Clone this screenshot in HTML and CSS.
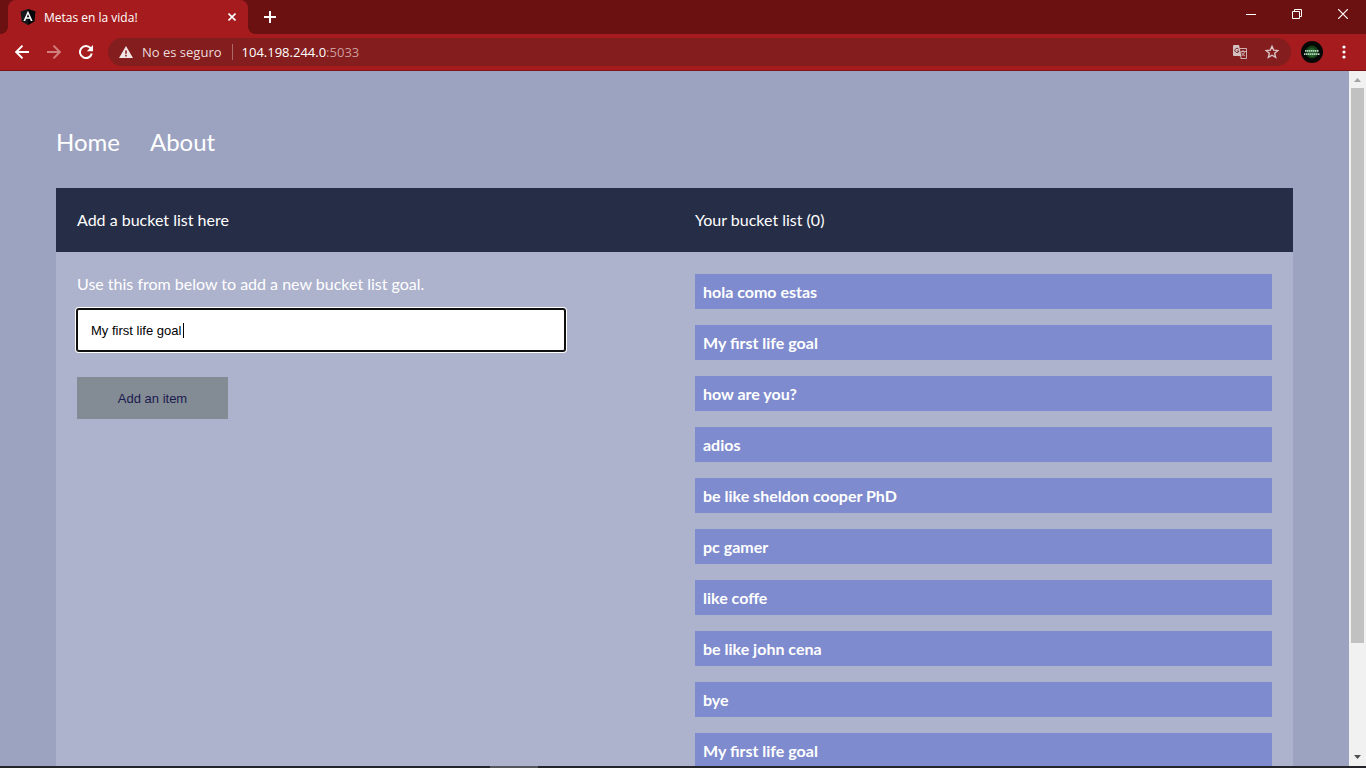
FILE: index.html
```html
<!DOCTYPE html>
<html lang="es">
<head>
<meta charset="utf-8">
<title>Metas en la vida!</title>
<link rel="stylesheet" href="styles.css">
</head>
<body>
<header class="browser">
  <div class="tab-strip">
    <div class="tab">
      <svg class="favicon" viewBox="0 0 16 16" width="16" height="16" aria-hidden="true">
        <path d="M8 0l7.4 2.6-1.1 9.8L8 16l-6.3-3.6L.6 2.6z" fill="#15181d"/>
        <path d="M8 0l7.4 2.6-1.1 9.8L8 16z" fill="#050608"/>
        <path d="M8 1.8L3.4 12h1.800l.9-2.300h3.800l.9 2.300h1.800zM8 5.100l1.300 3.100H6.700z" fill="#fff" fill-rule="evenodd"/>
      </svg>
      <span class="tab-title">Metas en la vida!</span>
      <button class="tab-close" aria-label="Cerrar pestaña"><svg viewBox="0 0 8 8" width="8" height="8"><path d="M.5.5l7 7M7.500.500l-7 7" stroke="#fff" stroke-width="1.600"/></svg></button>
    </div>
    <button class="tab-new" aria-label="Nueva pestaña"><svg viewBox="0 0 12 12" width="12" height="12"><path d="M6 0v12M0 6h12" stroke="#fff" stroke-width="2"/></svg></button>
    <div class="window-controls">
      <button aria-label="Minimizar"><svg viewBox="0 0 10 10" width="10" height="10"><path d="M0 5.500h10" stroke="#fff"/></svg></button>
      <button aria-label="Restaurar"><svg viewBox="0 0 10 10" width="10" height="10"><path d="M.5 2.500h7v7h-7zM2.500 2.500v-2h7v7h-2" fill="none" stroke="#fff"/></svg></button>
      <button aria-label="Cerrar"><svg viewBox="0 0 10 10" width="10" height="10"><path d="M0 0l10 10M10 0L0 10" stroke="#fff" stroke-width="1.200"/></svg></button>
    </div>
  </div>
  <div class="toolbar">
    <div class="nav-buttons">
      <button aria-label="Atrás"><svg viewBox="0 0 14 14" width="14" height="14"><path d="M14 7H1.500M7.500.700L1.200 7l6.300 6.300" fill="none" stroke="#fff" stroke-width="1.900"/></svg></button>
      <button aria-label="Adelante"><svg viewBox="0 0 14 14" width="14" height="14"><path d="M0 7h12.500M6.500.700L12.800 7l-6.300 6.300" fill="none" stroke="#d1807f" stroke-width="1.900"/></svg></button>
      <button aria-label="Recargar"><svg viewBox="0 0 14 14" width="14" height="14"><path d="M11.600 3.200A6 6 0 1 0 12.800 8.500" fill="none" stroke="#fff" stroke-width="2"/><path d="M14 0v6.200H7.800z" fill="#fff"/></svg></button>
    </div>
    <div class="address">
      <svg class="warning" viewBox="0 0 14 12" width="14" height="12" aria-hidden="true"><path d="M7 0l7 12H0zM6.200 4.500v3.200h1.600V4.500zM6.200 8.800v1.600h1.600V8.800z" fill="#f0e4e4" fill-rule="evenodd"/></svg>
      <span class="security">No es seguro</span>
      <span class="url">104.198.244.0<span class="port">:5033</span></span>
      <button class="translate" aria-label="Traducir"><svg viewBox="0 0 14 14" width="14" height="14"><path d="M6.500 3.500h7v10h-6" fill="none" stroke="#cdb1b2"/><path d="M0 1q0-1 1-1h5l2.500 11H1q-1 0-1-1z" fill="#d4c2c2"/><path d="M5.600 4.100A2.100 2.100 0 1 0 6 6H4" fill="none" stroke="#7d3032"/><path d="M7.500 6.500H13M10 5v1.500M11.800 6.500q-.8 3-3.300 4.500M8.500 7.500q1.200 2.500 3.500 3.500M7 11l1.800 2.500" fill="none" stroke="#cdb1b2"/></svg></button>
      <button aria-label="Añadir a marcadores"><svg viewBox="0 0 14 14" width="14" height="14"><path d="M7 1.300l1.650 3.850 4.200.4-3.200 2.750 1 4.100L7 10.200l-3.650 2.200 1-4.100-3.200-2.750 4.200-.4z" fill="none" stroke="#dac4c4" stroke-width="1.400"/></svg></button>
    </div>
    <button class="avatar" aria-label="Perfil"><svg viewBox="0 0 22 22" width="22" height="22"><circle cx="11" cy="11" r="11" fill="#050807"/><circle cx="11" cy="11" r="6.500" fill="#153d18"/><circle cx="11" cy="11.500" r="4.500" fill="#21602a"/><path d="M4 9.800h14M3 13.200h16" stroke="#b9d4bd" stroke-width="1.700" stroke-dasharray="1.500 .5"/></svg></button>
    <button class="menu" aria-label="Menú"><svg viewBox="0 0 4 14" width="4" height="14"><circle cx="2" cy="2" r="1.600" fill="#fff"/><circle cx="2" cy="7" r="1.600" fill="#fff"/><circle cx="2" cy="12" r="1.600" fill="#fff"/></svg></button>
  </div>
</header>
<div class="viewport">
  <div class="page">
    <nav class="site-nav">
      <a href="#home">Home</a>
      <a href="#about">About</a>
    </nav>
    <main class="card">
      <div class="card-head">
        <p>Add a bucket list here</p>
        <p>Your bucket list (0)</p>
      </div>
      <div class="card-body">
        <form class="goal-form">
          <label for="goal">Use this from below to add a new bucket list goal.</label>
          <div class="field">
            <input id="goal" type="text" value="My first life goal">
            <span class="caret"></span>
          </div>
          <button class="submit" type="button">Add an item</button>
        </form>
        <ul class="goals">
          <li>hola como estas</li>
          <li>My first life goal</li>
          <li>how are you?</li>
          <li>adios</li>
          <li>be like sheldon cooper PhD</li>
          <li>pc gamer</li>
          <li>like coffe</li>
          <li>be like john cena</li>
          <li>bye</li>
          <li>My first life goal</li>
        </ul>
      </div>
    </main>
  </div>
  <div class="scrollbar">
    <svg viewBox="0 0 17 17" width="17" height="17"><path d="M5 11h7L8.500 7z" fill="#a3a3a3"/></svg>
    <div class="track"><div class="thumb"></div></div>
    <svg viewBox="0 0 17 17" width="17" height="17"><path d="M5 6h7L8.500 10z" fill="#505050"/></svg>
  </div>
</div>
<div class="taskbar"><span class="task"></span></div>
</body>
</html>
```
FILE: styles.css
```css
* { box-sizing: border-box; }

body {
  display: flex;
  flex-direction: column;
  height: 100vh;
  margin: 0;
  overflow: hidden;
  font-family: Lato, sans-serif;
  font-size: 16px;
  color: #fff;
}

button {
  display: flex;
  align-items: center;
  justify-content: center;
  padding: 0;
  border: 0;
  background: none;
}

svg { display: block; flex: none; }

/* Browser frame */
.browser {
  flex: none;
  background: #a61c1e;
  border-bottom: 1px solid #7d1416;
  font-family: "Open Sans", sans-serif;
}

.tab-strip {
  display: flex;
  height: 34px;
  padding-left: 8px;
  background: #6b1112;
}

.tab {
  position: relative;
  display: flex;
  align-items: center;
  width: 240px;
  padding: 0 12px;
  border-radius: 8px 8px 0 0;
  background: #a61c1e;
}

.tab::before,
.tab::after {
  content: "";
  position: absolute;
  bottom: 0;
  width: 8px;
  height: 8px;
}

.tab::before {
  right: 100%;
  background: radial-gradient(circle at 0 0, #6b1112 8px, #a61c1e 8px);
}

.tab::after {
  left: 100%;
  background: radial-gradient(circle at 100% 0, #6b1112 8px, #a61c1e 8px);
}

.tab-title { flex: 1; margin-left: 8px; font-size: 12px; }
.tab-close { width: 8px; height: 16px; }
.tab-new { width: 28px; margin-left: 8px; }
.window-controls { display: flex; height: 28px; margin-left: auto; }
.window-controls button { width: 46px; }

.toolbar {
  display: flex;
  align-items: center;
  height: 36px;
  padding: 0 12px 0 6px;
}

.nav-buttons { display: flex; }
.nav-buttons button { width: 32px; height: 28px; }

.address {
  display: flex;
  flex: 1;
  align-items: center;
  height: 28px;
  margin: 0 10px 0 6px;
  padding: 0 11px;
  border-radius: 14px;
  background: #831d1e;
  font-size: 13px;
  line-height: 16px;
}

.security {
  margin: 0 10px 0 9px;
  color: #ecdcdc;
}

.url {
  flex: 1;
  padding-left: 9px;
  border-left: 1px solid #ad6a6b;
}

.port { color: #cd9b9c; }
.address button { width: 16px; height: 16px; }
.address .translate { margin-right: 16px; }
.avatar { width: 22px; height: 22px; }
.menu { width: 20px; height: 28px; margin-left: 11px; }

/* Page */
.viewport {
  display: flex;
  flex: 1;
  min-height: 0;
  background: #9ca3c0;
}

.page {
  flex: 1;
  padding: 55px 56px 0;
  overflow: hidden;
}

.site-nav {
  display: flex;
  gap: 30px;
  margin-bottom: 30px;
  font-size: 24px;
  line-height: 32px;
}

.site-nav a { color: #fff; text-decoration: none; }
.card { background: #adb2cd; }

.card-head,
.card-body {
  display: grid;
  grid-template-columns: 1fr 1fr;
  column-gap: 41px;
  padding: 0 21px;
}

.card-head { background: #262d47; }
.card-head p { margin: 0; line-height: 64px; }
.card-body { padding-top: 22px; padding-bottom: 22px; }
.goal-form label { display: block; line-height: 20px; }

.field {
  position: relative;
  width: 85%;
  max-width: 488px;
  margin: 15px 0 26px;
}

.field input {
  display: block;
  width: 100%;
  height: 42px;
  padding: 0 13px;
  border: 1px solid #101010;
  border-radius: 2px;
  outline: none;
  box-shadow: 0 0 0 1px #101010, 0 0 0 2px #fff;
  background: #fff;
  color: #000;
  font-family: "Liberation Sans", sans-serif;
  font-size: 13px;
}

.caret {
  position: absolute;
  top: 14px;
  left: 106px;
  width: 1px;
  height: 15px;
  background: #000;
}

.submit {
  width: 151px;
  height: 42px;
  background: #838b95;
  color: #1b1b4d;
  font-family: "Liberation Sans", sans-serif;
  font-size: 13px;
}

.goals {
  display: grid;
  gap: 16px;
  margin: 0;
  padding: 0;
  list-style: none;
}

.goals li {
  padding: 8px;
  background: #7e8bce;
  font-weight: 700;
  line-height: 19px;
}

/* Scrollbar and taskbar edge */
.scrollbar {
  display: flex;
  flex-direction: column;
  width: 17px;
  background: #f1f1f1;
}

.track { flex: 1; padding: 0 2px; }
.thumb { height: 84%; background: #c1c1c1; }
.taskbar { flex: none; height: 2px; background: #24242b; }
.task { display: block; width: 48px; height: 2px; margin-left: 490px; background: #55555c; }
```
